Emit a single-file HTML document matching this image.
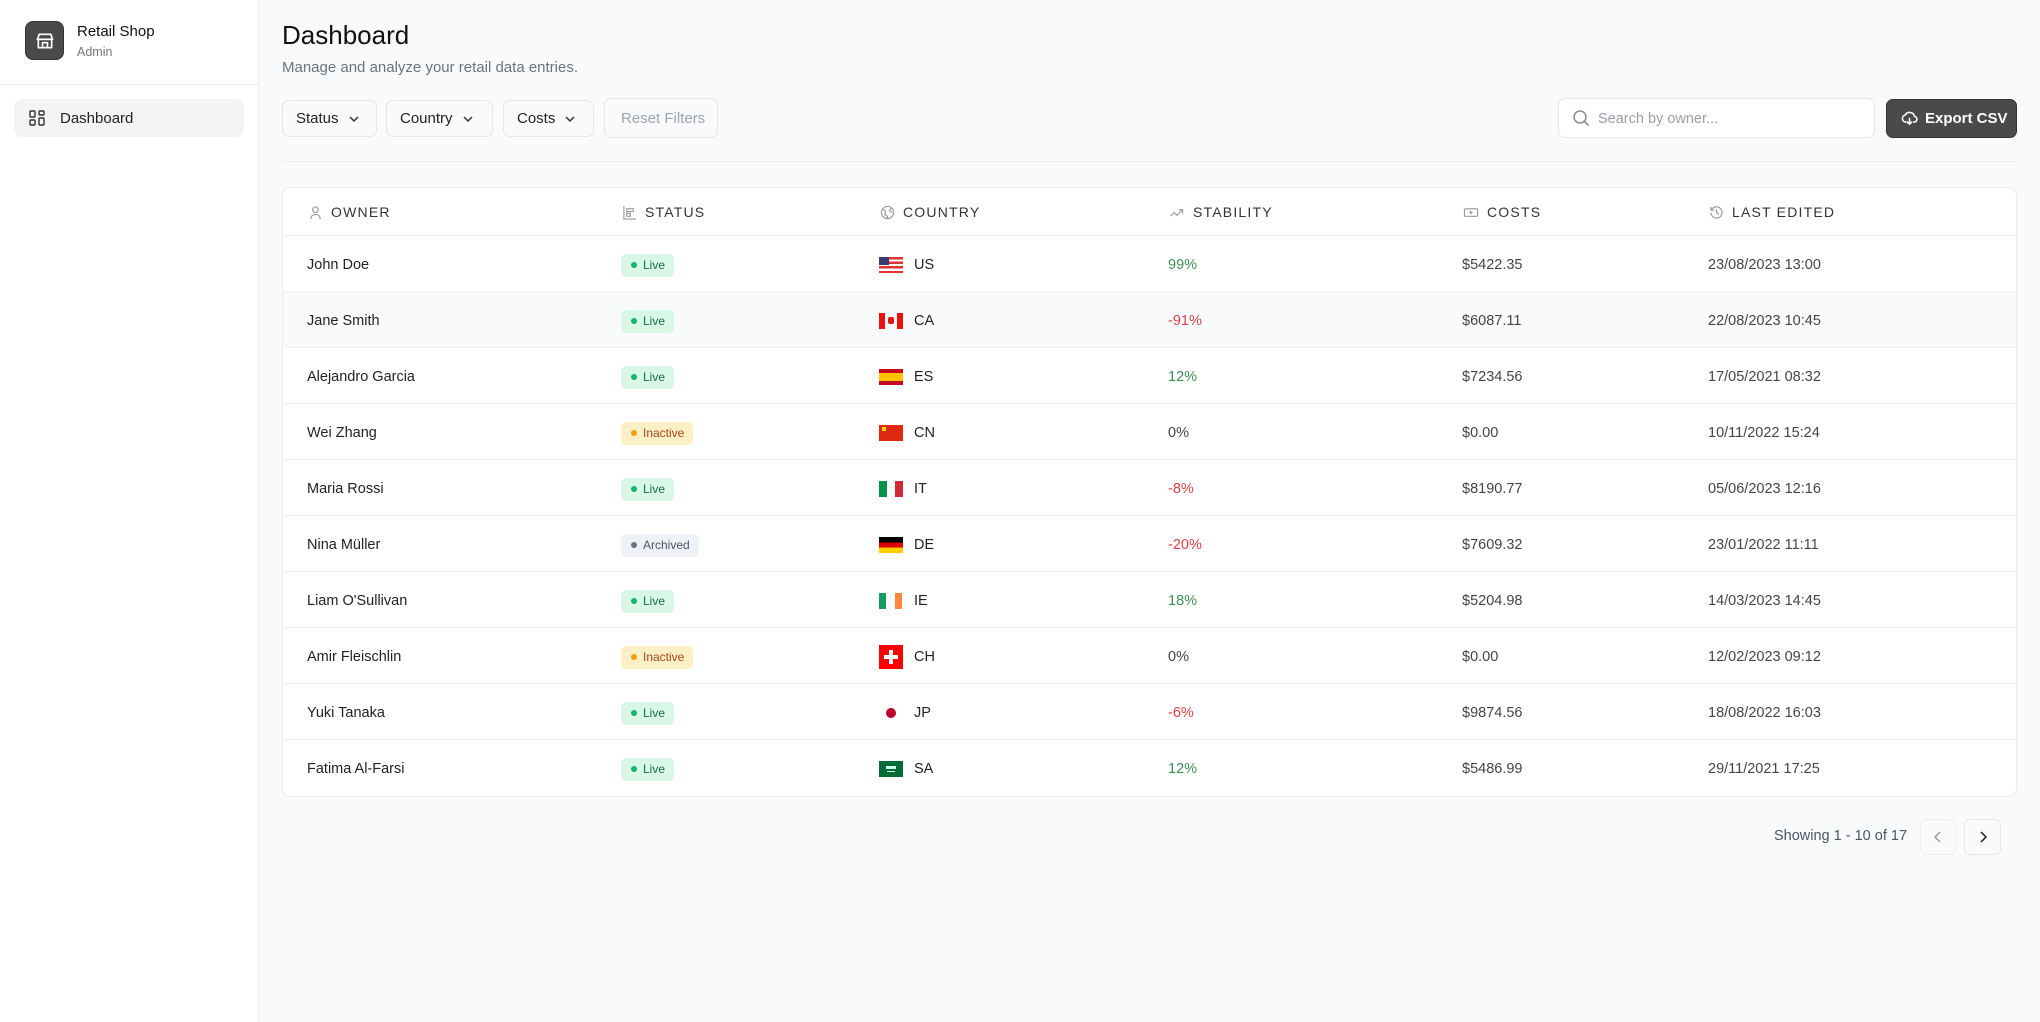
<!DOCTYPE html>
<html><head><meta charset="utf-8"><style>
*{box-sizing:border-box;margin:0;padding:0}
body{width:2040px;height:1022px;background:#f9fafb;font-family:"Liberation Sans",sans-serif;color:#1f2328;position:relative;overflow:hidden}
.abs{position:absolute}
.side{left:0;top:0;width:259px;height:1022px;background:#fff;border-right:1px solid #ebecef}
.logo{left:25px;top:21px;width:39px;height:39px;background:#4a4a4a;border-radius:8px;border:1px solid #333;display:flex;align-items:center;justify-content:center}
.btn{top:100px;height:37px;border:1px solid #e4e6ea;border-radius:7px;background:#f9fafb;font-size:15px;color:#222;display:flex;align-items:center;padding-left:13px}
.btn svg{margin-left:9px}
.card{left:282px;top:187px;width:1735px;height:610px;background:#fff;border:1px solid #ebecef;border-radius:8px;overflow:hidden}
.hdr{position:absolute;top:0;left:0;right:0;height:48px;border-bottom:1px solid #eef0f2}
.h{position:absolute;top:0;height:48px;display:flex;align-items:center;font-size:14px;letter-spacing:1.2px;color:#333;}
.h svg{margin-right:8px}
.row{position:absolute;left:0;right:0;height:56px;border-bottom:1px solid #eef0f2;font-size:14.5px;color:#222}
.row.alt{background:#f9fafb}
.c{position:absolute;top:1px;height:56px;display:flex;align-items:center}
.badge{height:23px;border-radius:5px;font-size:12px;padding:0 9px 0 10px;display:flex;align-items:center}
.badge i{width:6px;height:6px;border-radius:50%;display:inline-block;margin-right:6px}
.live{background:#d9f7e6;color:#1e6b43}.live i{background:#1bb36a}
.inact{background:#fdf0c4;color:#a0461c}.inact i{background:#f39c12}
.arch{background:#eef1f5;color:#4b5563}.arch i{background:#6b7280}
.flag{width:24px;height:16px;margin-right:11px;position:relative;overflow:hidden}
.g{color:#3f8f5a}.r{color:#dc3e45}.n{color:#444}
.m{color:#444}
</style></head><body>
<div class="abs side">
 <div class="abs logo"><svg width="20" height="20" viewBox="0 0 24 24" fill="none" stroke="#fff" stroke-width="2" stroke-linecap="round" stroke-linejoin="round"><path d="M4 10v10h16V10"/><path d="M3 10l2-6h14l2 6z"/><path d="M3 10h18"/><rect x="9" y="14" width="6" height="6"/></svg></div>
 <div class="abs" style="left:77px;top:23px;font-size:15px;color:#111">Retail Shop</div>
 <div class="abs" style="left:77px;top:45px;font-size:12.5px;color:#777">Admin</div>
 <div class="abs" style="left:0;top:84px;width:259px;height:1px;background:#ebecef"></div>
 <div class="abs" style="left:14px;top:99px;width:230px;height:38px;background:#f3f3f4;border-radius:8px"></div>
 <svg class="abs" style="left:29px;top:110px" width="16" height="16" viewBox="0 0 16 16" fill="none" stroke="#333" stroke-width="1.4"><rect x="1" y="1" width="5" height="6" rx="1"/><rect x="10" y="1" width="5" height="4" rx="1"/><rect x="10" y="8" width="5" height="7" rx="1"/><rect x="1" y="10" width="5" height="5" rx="1"/></svg>
 <div class="abs" style="left:60px;top:110px;font-size:15px;color:#222">Dashboard</div>
</div>

<div class="abs" style="left:282px;top:20px;font-size:26px;color:#111">Dashboard</div>
<div class="abs" style="left:282px;top:59px;font-size:15px;color:#6b7280">Manage and analyze your retail data entries.</div>

<div class="abs btn" style="left:282px;width:95px">Status<svg width="12" height="8" viewBox="0 0 12 8" fill="none" stroke="#333" stroke-width="1.5"><path d="M2 2l4 4 4-4"/></svg></div>
<div class="abs btn" style="left:386px;width:107px">Country<svg width="12" height="8" viewBox="0 0 12 8" fill="none" stroke="#333" stroke-width="1.5"><path d="M2 2l4 4 4-4"/></svg></div>
<div class="abs btn" style="left:503px;width:91px">Costs<svg width="12" height="8" viewBox="0 0 12 8" fill="none" stroke="#333" stroke-width="1.5"><path d="M2 2l4 4 4-4"/></svg></div>
<div class="abs btn" style="left:604px;width:114px;top:98px;height:40px;color:#a0a4ab;padding-left:16px">Reset Filters</div>

<div class="abs" style="left:1558px;top:98px;width:317px;height:40px;background:#fff;border:1px solid #e4e6ea;border-radius:7px"></div>
<svg class="abs" style="left:1572px;top:109px" width="18" height="18" viewBox="0 0 18 18" fill="none" stroke="#8a8f98" stroke-width="1.6"><circle cx="8" cy="8" r="6"/><path d="M12.5 12.5l4 4"/></svg>
<div class="abs" style="left:1598px;top:111px;font-size:14.5px;color:#9aa0a8">Search by owner...</div>
<div class="abs" style="left:1886px;top:99px;width:131px;height:39px;background:#4a4a4a;border:1px solid #333;border-radius:7px"></div>
<svg class="abs" style="left:1901px;top:110px" width="17" height="17" viewBox="0 0 24 24" fill="none" stroke="#fff" stroke-width="2.2" stroke-linecap="round" stroke-linejoin="round"><path d="M7 17a5 5 0 0 1-1-9.9A7 7 0 0 1 19 9a4 4 0 0 1-1 8"/><path d="M12 12v8M9 17l3 3 3-3"/></svg>
<div class="abs" style="left:1925px;top:110px;font-size:15px;color:#fff;font-weight:bold">Export CSV</div>

<div class="abs" style="left:282px;top:161px;width:1735px;height:1px;background:#eceef1"></div>

<div class="abs card">
 <div class="hdr">
  <div class="h" style="left:25px"><svg width="15" height="15" viewBox="0 0 16 16" fill="none" stroke="#999" stroke-width="1.2"><circle cx="8" cy="5" r="3"/><path d="M3 15c0-3 2-5 5-5s5 2 5 5"/></svg>OWNER</div>
  <div class="h" style="left:339px"><svg width="15" height="15" viewBox="0 0 16 16" fill="none" stroke="#999" stroke-width="1.2"><path d="M2 1v14h13"/><rect x="5" y="4" width="7" height="3"/><rect x="5" y="9" width="4" height="3"/></svg>STATUS</div>
  <div class="h" style="left:597px"><svg width="15" height="15" viewBox="0 0 16 16" fill="none" stroke="#999" stroke-width="1.2"><circle cx="8" cy="8" r="6.5"/><path d="M3 4l3 3-1 3 3 2v3M12 3l-2 3 3 2"/></svg>COUNTRY</div>
  <div class="h" style="left:886px"><svg width="16" height="15" viewBox="0 0 16 16" fill="none" stroke="#999" stroke-width="1.2"><path d="M1 12l4-4 3 3 6-6M10 5h4v4"/></svg>STABILITY</div>
  <div class="h" style="left:1180px"><svg width="16" height="15" viewBox="0 0 16 16" fill="none" stroke="#999" stroke-width="1.2"><rect x="1" y="4" width="14" height="8" rx="1"/><circle cx="8" cy="8" r="1"/></svg>COSTS</div>
  <div class="h" style="left:1426px"><svg width="15" height="15" viewBox="0 0 16 16" fill="none" stroke="#999" stroke-width="1.2"><path d="M2 8a6 6 0 1 0 2-4.5L2 5.5M2 2v3.5h3.5"/><path d="M8 4.5V8l2.5 2"/></svg>LAST EDITED</div>
 </div>
<div class="row" style="top:48px"><div class="c" style="left:24px">John Doe</div><div class="c" style="left:338px"><span class="badge live"><i></i>Live</span></div><div class="c" style="left:596px"><div class="flag" style="background:repeating-linear-gradient(#d33 0 2.3px,#fff 2.3px 4.6px)"><div style="position:absolute;left:0;top:0;width:10px;height:8px;background:#3c3b6e"></div></div>US</div><div class="c g" style="left:885px">99%</div><div class="c m" style="left:1179px">$5422.35</div><div class="c m" style="left:1425px">23/08/2023 13:00</div></div>
<div class="row alt" style="top:104px"><div class="c" style="left:24px">Jane Smith</div><div class="c" style="left:338px"><span class="badge live"><i></i>Live</span></div><div class="c" style="left:596px"><div class="flag" style="background:linear-gradient(90deg,#e11 0 6px,#fff 6px 18px,#e11 18px)"><div style="position:absolute;left:9px;top:4px;width:6px;height:7px;background:#e11;border-radius:2px"></div></div>CA</div><div class="c r" style="left:885px">-91%</div><div class="c m" style="left:1179px">$6087.11</div><div class="c m" style="left:1425px">22/08/2023 10:45</div></div>
<div class="row" style="top:160px"><div class="c" style="left:24px">Alejandro Garcia</div><div class="c" style="left:338px"><span class="badge live"><i></i>Live</span></div><div class="c" style="left:596px"><div class="flag" style="background:linear-gradient(#c60b1e 0 4px,#ffc400 4px 12px,#c60b1e 12px)"></div>ES</div><div class="c g" style="left:885px">12%</div><div class="c m" style="left:1179px">$7234.56</div><div class="c m" style="left:1425px">17/05/2021 08:32</div></div>
<div class="row" style="top:216px"><div class="c" style="left:24px">Wei Zhang</div><div class="c" style="left:338px"><span class="badge inact"><i></i>Inactive</span></div><div class="c" style="left:596px"><div class="flag" style="background:#de2910"><div style="position:absolute;left:3px;top:2px;width:4px;height:4px;background:#ffde00"></div></div>CN</div><div class="c n" style="left:885px">0%</div><div class="c m" style="left:1179px">$0.00</div><div class="c m" style="left:1425px">10/11/2022 15:24</div></div>
<div class="row" style="top:272px"><div class="c" style="left:24px">Maria Rossi</div><div class="c" style="left:338px"><span class="badge live"><i></i>Live</span></div><div class="c" style="left:596px"><div class="flag" style="background:linear-gradient(90deg,#009246 0 8px,#fff 8px 16px,#ce2b37 16px)"></div>IT</div><div class="c r" style="left:885px">-8%</div><div class="c m" style="left:1179px">$8190.77</div><div class="c m" style="left:1425px">05/06/2023 12:16</div></div>
<div class="row" style="top:328px"><div class="c" style="left:24px">Nina Müller</div><div class="c" style="left:338px"><span class="badge arch"><i></i>Archived</span></div><div class="c" style="left:596px"><div class="flag" style="background:linear-gradient(#000 0 5.3px,#d00 5.3px 10.6px,#ffce00 10.6px)"></div>DE</div><div class="c r" style="left:885px">-20%</div><div class="c m" style="left:1179px">$7609.32</div><div class="c m" style="left:1425px">23/01/2022 11:11</div></div>
<div class="row" style="top:384px"><div class="c" style="left:24px">Liam O'Sullivan</div><div class="c" style="left:338px"><span class="badge live"><i></i>Live</span></div><div class="c" style="left:596px"><div class="flag" style="background:linear-gradient(90deg,#169b62 0 7px,#fff 7px 16px,#ff883e 16px 23px,#fff 23px)"></div>IE</div><div class="c g" style="left:885px">18%</div><div class="c m" style="left:1179px">$5204.98</div><div class="c m" style="left:1425px">14/03/2023 14:45</div></div>
<div class="row" style="top:440px"><div class="c" style="left:24px">Amir Fleischlin</div><div class="c" style="left:338px"><span class="badge inact"><i></i>Inactive</span></div><div class="c" style="left:596px"><div class="flag" style="width:24px;height:24px;background:#f00"><div style="position:absolute;left:10px;top:5px;width:4px;height:14px;background:#fff"></div><div style="position:absolute;left:5px;top:10px;width:14px;height:4px;background:#fff"></div></div>CH</div><div class="c n" style="left:885px">0%</div><div class="c m" style="left:1179px">$0.00</div><div class="c m" style="left:1425px">12/02/2023 09:12</div></div>
<div class="row" style="top:496px"><div class="c" style="left:24px">Yuki Tanaka</div><div class="c" style="left:338px"><span class="badge live"><i></i>Live</span></div><div class="c" style="left:596px"><div class="flag" style="background:#fff"><div style="position:absolute;left:7px;top:3px;width:10px;height:10px;border-radius:50%;background:#bc002d"></div></div>JP</div><div class="c r" style="left:885px">-6%</div><div class="c m" style="left:1179px">$9874.56</div><div class="c m" style="left:1425px">18/08/2022 16:03</div></div>
<div class="row" style="top:552px;border-bottom:none"><div class="c" style="left:24px">Fatima Al-Farsi</div><div class="c" style="left:338px"><span class="badge live"><i></i>Live</span></div><div class="c" style="left:596px"><div class="flag" style="background:#006c35"><div style="position:absolute;left:7px;top:5px;width:10px;height:3px;background:#cfe"></div><div style="position:absolute;left:8px;top:10px;width:8px;height:1px;background:#cfe"></div></div>SA</div><div class="c g" style="left:885px">12%</div><div class="c m" style="left:1179px">$5486.99</div><div class="c m" style="left:1425px">29/11/2021 17:25</div></div>
</div>

<div class="abs" style="left:1774px;top:828px;font-size:14.5px;color:#4b5563">Showing 1 - 10 of 17</div>
<div class="abs" style="left:1920px;top:819px;width:36px;height:36px;border:1px solid #eceef1;border-radius:6px"></div>
<svg class="abs" style="left:1932px;top:831px" width="12" height="12" viewBox="0 0 12 12" fill="none" stroke="#999" stroke-width="1.5"><path d="M8 1L3 6l5 5"/></svg>
<div class="abs" style="left:1964px;top:819px;width:37px;height:36px;border:1px solid #e4e6ea;border-radius:6px"></div>
<svg class="abs" style="left:1977px;top:831px" width="12" height="12" viewBox="0 0 12 12" fill="none" stroke="#222" stroke-width="1.5"><path d="M4 1l5 5-5 5"/></svg>
</body></html>
